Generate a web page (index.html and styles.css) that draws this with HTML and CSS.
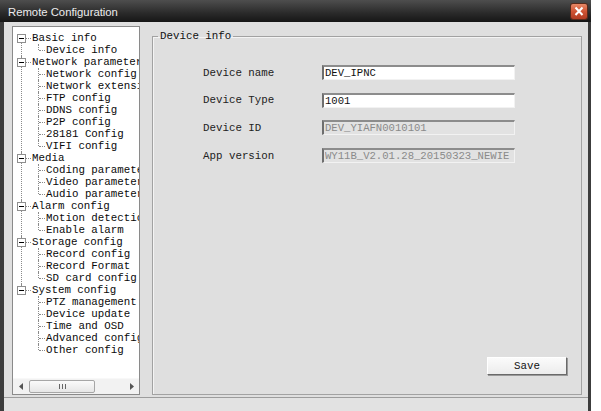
FILE: index.html
```html
<!DOCTYPE html>
<html>
<head>
<meta charset="utf-8">
<title>Remote Configuration</title>
<link rel="stylesheet" href="styles.css">
</head>
<body>
<div class="window">
  <div class="titlebar">
    <span class="title">Remote Configuration</span>
    <span class="close"><svg width="16" height="15" viewBox="0 0 16 15"><path d="M4.5 3.5 L11.5 11 M11.5 3.5 L4.5 11" stroke="#fff" stroke-width="2" fill="none"/></svg></span>
  </div>
  <div class="client">
    <div class="main">
      <div class="tree">
        <div class="tree-body">
          <ul class="top">
            <li><div class="row"><span class="box"></span><span class="hl"></span><span class="lbl">Basic info</span></div>
              <ul class="kids">
                <li><div class="crow"><span class="chl"></span><span class="lbl">Device info</span></div></li>
              </ul>
            </li>
            <li><div class="row"><span class="box"></span><span class="hl"></span><span class="lbl">Network parameter</span></div>
              <ul class="kids">
                <li><div class="crow"><span class="chl"></span><span class="lbl">Network config</span></div></li>
                <li><div class="crow"><span class="chl"></span><span class="lbl">Network extension</span></div></li>
                <li><div class="crow"><span class="chl"></span><span class="lbl">FTP config</span></div></li>
                <li><div class="crow"><span class="chl"></span><span class="lbl">DDNS config</span></div></li>
                <li><div class="crow"><span class="chl"></span><span class="lbl">P2P config</span></div></li>
                <li><div class="crow"><span class="chl"></span><span class="lbl">28181 Config</span></div></li>
                <li><div class="crow"><span class="chl"></span><span class="lbl">VIFI config</span></div></li>
              </ul>
            </li>
            <li><div class="row"><span class="box"></span><span class="hl"></span><span class="lbl">Media</span></div>
              <ul class="kids">
                <li><div class="crow"><span class="chl"></span><span class="lbl">Coding parameter</span></div></li>
                <li><div class="crow"><span class="chl"></span><span class="lbl">Video parameter</span></div></li>
                <li><div class="crow"><span class="chl"></span><span class="lbl">Audio parameter</span></div></li>
              </ul>
            </li>
            <li><div class="row"><span class="box"></span><span class="hl"></span><span class="lbl">Alarm config</span></div>
              <ul class="kids">
                <li><div class="crow"><span class="chl"></span><span class="lbl">Motion detection</span></div></li>
                <li><div class="crow"><span class="chl"></span><span class="lbl">Enable alarm</span></div></li>
              </ul>
            </li>
            <li><div class="row"><span class="box"></span><span class="hl"></span><span class="lbl">Storage config</span></div>
              <ul class="kids">
                <li><div class="crow"><span class="chl"></span><span class="lbl">Record config</span></div></li>
                <li><div class="crow"><span class="chl"></span><span class="lbl">Record Format</span></div></li>
                <li><div class="crow"><span class="chl"></span><span class="lbl">SD card config</span></div></li>
              </ul>
            </li>
            <li><div class="row"><span class="box"></span><span class="hl"></span><span class="lbl">System config</span></div>
              <ul class="kids">
                <li><div class="crow"><span class="chl"></span><span class="lbl">PTZ management</span></div></li>
                <li><div class="crow"><span class="chl"></span><span class="lbl">Device update</span></div></li>
                <li><div class="crow"><span class="chl"></span><span class="lbl">Time and OSD</span></div></li>
                <li><div class="crow"><span class="chl"></span><span class="lbl">Advanced config</span></div></li>
                <li><div class="crow"><span class="chl"></span><span class="lbl">Other config</span></div></li>
              </ul>
            </li>
          </ul>
        </div>
        <div class="hscroll">
          <span class="sbtn"><svg width="4" height="7" viewBox="0 0 4 7"><path d="M4 0 L0 3.5 L4 7 Z" fill="#555"/></svg></span>
          <span class="track"><span class="thumb"><span class="grip"></span></span></span>
          <span class="sbtn"><svg width="4" height="7" viewBox="0 0 4 7"><path d="M0 0 L4 3.5 L0 7 Z" fill="#555"/></svg></span>
        </div>
      </div>
      <fieldset class="group">
        <legend>Device info</legend>
        <div class="form">
          <label class="flabel">Device name</label>
          <input class="field" type="text" value="DEV_IPNC">
          <label class="flabel">Device Type</label>
          <input class="field" type="text" value="1001">
          <label class="flabel">Device ID</label>
          <input class="field off" type="text" value="DEV_YIAFN0010101" disabled>
          <label class="flabel">App version</label>
          <input class="field off" type="text" value="WY11B_V2.01.28_20150323_NEWIE" disabled>
        </div>
        <div class="actions"><button class="btn">Save</button></div>
      </fieldset>
    </div>
    <div class="status"></div>
  </div>
</div>
</body>
</html>
```

FILE: styles.css
```css
html, body {
  margin: 0;
  padding: 0;
  background: #ffffff;
}
body {
  font-family: "Liberation Mono", "DejaVu Sans Mono", monospace;
  font-size: 10.8px;
  color: #111;
}
.window {
  width: 591px;
  height: 411px;
  display: flex;
  flex-direction: column;
  background: linear-gradient(90deg, #3c3c3c, #555 50%, #3c3c3c);
}
.titlebar {
  height: 22px;
  flex: none;
  display: flex;
  align-items: center;
  justify-content: space-between;
  padding: 0 4px 0 8px;
  background: linear-gradient(#4e4e4e, #2a2a2a 60%, #161616);
}
.title {
  font-family: "Liberation Sans", Arial, sans-serif;
  font-size: 11.3px;
  color: #ececec;
  padding-top: 1px;
}
.close {
  width: 16px;
  height: 15px;
  display: flex;
  border-radius: 2px;
  background: linear-gradient(#e88866, #cf5434 50%, #b23c22);
  box-shadow: 0 0 0 1px #5a2a1a;
}
.client {
  flex: 1;
  margin: 0 3px 0 4px;
  background: #dfdfdf;
  display: flex;
  flex-direction: column;
}
.main {
  flex: 1;
  display: flex;
  gap: 12px;
  padding: 4px 6px 2px 8px;
  min-height: 0;
}
.tree {
  width: 128px;
  flex: none;
  box-sizing: border-box;
  border: 1px solid #8a8a8a;
  background: #fff;
  display: flex;
  flex-direction: column;
  overflow: hidden;
}
.tree-body {
  flex: 1;
  padding-top: 5px;
  overflow: hidden;
}
.tree ul {
  list-style: none;
  margin: 0;
  padding: 0;
}
.top > li {
  position: relative;
}
.top > li::before {
  content: "";
  position: absolute;
  left: 8px;
  top: 0;
  bottom: 0;
  border-left: 1px dotted #8a8a8a;
}
.top > li:first-child::before {
  top: 6px;
}
.top > li:last-child::before {
  bottom: auto;
  height: 6px;
}
.row, .crow {
  height: 12px;
  display: flex;
  align-items: center;
  white-space: nowrap;
}
.box {
  position: relative;
  z-index: 1;
  flex: none;
  width: 9px;
  height: 9px;
  margin-left: 4px;
  box-sizing: border-box;
  border: 1px solid #8e8e8e;
  background: linear-gradient(#000, #000) center / 5px 1px no-repeat, #fff;
}
.hl {
  flex: none;
  width: 5px;
  border-top: 1px dotted #8a8a8a;
  margin-right: 1px;
}
.kids > li {
  position: relative;
}
.kids > li::before {
  content: "";
  position: absolute;
  left: 25px;
  top: 0;
  bottom: 0;
  border-left: 1px dotted #8a8a8a;
}
.kids > li:last-child::before {
  bottom: auto;
  height: 6px;
}
.crow {
  padding-left: 26px;
}
.chl {
  flex: none;
  width: 6px;
  border-top: 1px dotted #8a8a8a;
  margin-right: 1px;
}
.lbl {
  line-height: 12px;
  color: #0a0a0a;
}
.hscroll {
  flex: none;
  height: 15px;
  display: flex;
  background: #f2f2f2;
  border-top: 1px solid #f8f8f8;
}
.sbtn {
  width: 15px;
  flex: none;
  display: flex;
  align-items: center;
  justify-content: center;
}
.track {
  flex: 1;
  display: flex;
  align-items: center;
}
.thumb {
  width: 66px;
  height: 13px;
  margin-left: 1px;
  box-sizing: border-box;
  border: 1px solid #a6a6a6;
  border-radius: 2px;
  background: linear-gradient(#fafafa, #e6e6e6);
  display: flex;
  align-items: center;
  justify-content: center;
}
.grip {
  width: 7px;
  height: 5px;
  background: repeating-linear-gradient(90deg, #666 0 1px, transparent 1px 3px);
}
.group {
  flex: 1;
  margin: 4px 0 0 0;
  padding: 23px 14px 19px 5px;
  border: 1px solid #a2a2a2;
  box-shadow: inset 1px 1px 0 #f4f4f4;
  display: flex;
  flex-direction: column;
  min-width: 0;
}
.group legend {
  padding: 0 2px;
  line-height: 12px;
  color: #111;
}
.form {
  margin-left: 45px;
  display: grid;
  grid-template-columns: 119px 193px;
  grid-auto-rows: 15px;
  row-gap: 12.7px;
  align-items: center;
}
.flabel {
  color: #222;
}
.field {
  width: 193px;
  height: 15px;
  box-sizing: border-box;
  margin: 0;
  padding: 0 0 0 1px;
  font: inherit;
  font-size: 10.6px;
  line-height: 11px;
  color: #111;
  background: #fff;
  border-style: solid;
  border-width: 2px 1px 1px 2px;
  border-color: #8c8c8c #f2f2f2 #f2f2f2 #6e6e6e;
  outline: none;
}
.field.off {
  background: #e2e2e2;
  color: #8a8a8a;
  -webkit-text-fill-color: #8a8a8a;
  opacity: 1;
}
.actions {
  margin-top: auto;
  display: flex;
  justify-content: flex-end;
}
.btn {
  width: 80px;
  height: 18px;
  margin: 0;
  padding: 0;
  font: inherit;
  color: #111;
  box-sizing: border-box;
  border-style: solid;
  border-width: 1px;
  border-color: #ffffff #6a6a6a #6a6a6a #ffffff;
  box-shadow: 1px 1px 0 #9a9a9a;
  background: linear-gradient(#fbfbfb, #ececec);
}
.status {
  flex: none;
  height: 13px;
  border-top: 1px solid #9c9c9c;
  background: #e2e2e2;
}
```
